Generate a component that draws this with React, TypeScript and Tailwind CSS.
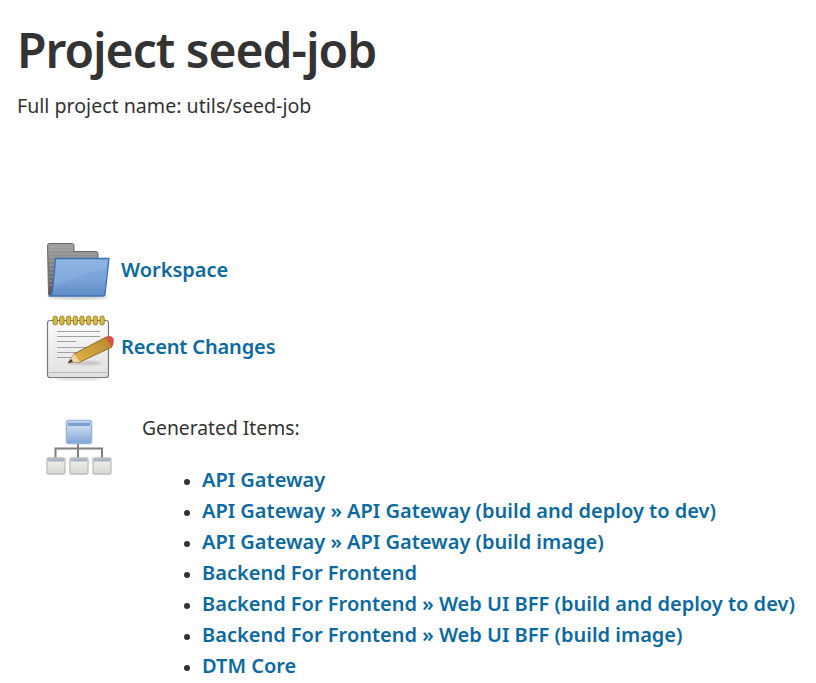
import React from 'react';

const items = [
  'API Gateway',
  'API Gateway » API Gateway (build and deploy to dev)',
  'API Gateway » API Gateway (build image)',
  'Backend For Frontend',
  'Backend For Frontend » Web UI BFF (build and deploy to dev)',
  'Backend For Frontend » Web UI BFF (build image)',
  'DTM Core',
];

const FolderIcon = () => (
  <svg width="66" height="64" viewBox="0 0 66 64" className="shrink-0 mt-[4px] blur-[0.4px]">
    <defs>
      <linearGradient id="fold" x1="0" y1="0" x2="0" y2="1">
        <stop offset="0" stopColor="#84aee2" />
        <stop offset="0.55" stopColor="#79a3da" />
        <stop offset="1" stopColor="#618dc9" />
      </linearGradient>
      <linearGradient id="back" x1="0" y1="0" x2="0" y2="1">
        <stop offset="0" stopColor="#a0a0a0" />
        <stop offset="1" stopColor="#565656" />
      </linearGradient>
      <filter id="soft"><feGaussianBlur stdDeviation="1.5" /></filter>
    </defs>
    <ellipse cx="32" cy="57" rx="30" ry="2.5" fill="#000" opacity="0.2" filter="url(#soft)" />
    <path d="M1.5 5.5 Q1.5 3.5 3.5 3.5 H26 Q28 3.5 28 5.5 V11.5 H50 Q52 11.5 52 13.5 V20 H60 L56 55.5 H4 Q2.5 55.5 2.5 54 Z" fill="url(#back)" stroke="#6a6a6a" strokeWidth="1" />
    <path d="M3 7 H27 M3 10 H27 M3 14 H51 M3 17 H51 M3 21 H9 M3 25 H9 M3 29 H8 M3 33 H8 M3 37 H7 M3 41 H7 M3 45 H6" stroke="#b4b4b4" strokeWidth="0.8" opacity="0.7" />
    <path d="M9.5 18.5 H63 L59 54.5 Q58.7 56 57 56 H3 Q6 55 6.5 51 Z" fill="url(#fold)" stroke="#3f70b3" strokeWidth="1.3" strokeLinejoin="round" />
    <path d="M11 20 H61 L60 28 Q36 33 8 48 Z" fill="#fff" opacity="0.09" />
  </svg>
);

const NotepadIcon = () => (
  <svg width="68" height="68" viewBox="0 0 68 68" className="shrink-0 blur-[0.4px]">
    <defs>
      <linearGradient id="paper" x1="0" y1="0" x2="0" y2="1">
        <stop offset="0" stopColor="#fbfbfb" />
        <stop offset="1" stopColor="#e0e0e0" />
      </linearGradient>
      <linearGradient id="pencil" x1="0" y1="1" x2="1" y2="0">
        <stop offset="0" stopColor="#e6b850" />
        <stop offset="1" stopColor="#b5862a" />
      </linearGradient>
      <filter id="soft2"><feGaussianBlur stdDeviation="1.2" /></filter>
    </defs>
    <ellipse cx="32" cy="66" rx="24" ry="1.5" fill="#000" opacity="0.15" filter="url(#soft2)" />
    <rect x="1.5" y="7.5" width="61" height="57" rx="2.5" fill="url(#paper)" stroke="#777" strokeWidth="1.2" />
    <rect x="2.5" y="59" width="59" height="1" fill="#bbb" />
    <path d="M11 18.5 H54 M11 23.5 H54 M11 28.5 H30 M11 34.5 H54 M11 39.5 H54 M11 44.5 H25" stroke="#a0a0a0" strokeWidth="1.2" />
    {[9, 15.7, 22.4, 29.1, 35.8, 42.5, 49.2, 55.9].map((x) => (
      <rect key={x} x={x - 2} y="3" width="4.4" height="9" rx="2.2" fill="#d8b93e" stroke="#8a7420" strokeWidth="0.8" />
    ))}
    <ellipse cx="40" cy="50" rx="16" ry="2" fill="#000" opacity="0.15" filter="url(#soft2)" />
    <path d="M22 50 L28 41 L60 24 L66 34 L34 49 Z" fill="url(#pencil)" stroke="#7c5a14" strokeWidth="0.8" strokeLinejoin="round" />
    <path d="M22 50 L28 41 L34 49 Z" fill="#ecd6a8" />
    <path d="M22 50 L25 46 L27 49 Z" fill="#333" />
    <path d="M59.5 24 Q65 21.5 67.5 25.5 Q68.5 31 65.5 34.5 Z" fill="#d9534a" />
  </svg>
);

const TreeIcon = () => (
  <svg width="66" height="56" viewBox="0 0 66 56" className="shrink-0 blur-[0.4px]">
    <defs>
      <linearGradient id="top" x1="0" y1="0" x2="0" y2="1">
        <stop offset="0" stopColor="#e3ecf8" />
        <stop offset="1" stopColor="#7fa4d6" />
      </linearGradient>
      <linearGradient id="leaf" x1="0" y1="0" x2="0" y2="1">
        <stop offset="0" stopColor="#f2f3ef" />
        <stop offset="1" stopColor="#d6d8d2" />
      </linearGradient>
    </defs>
    <path d="M32 25 V39 M9.5 39 V29.5 H56 V39" stroke="#7f7f7f" strokeWidth="2" fill="none" />
    <rect x="20.5" y="1.5" width="25" height="23" rx="2.5" fill="url(#top)" stroke="#98b4dc" strokeWidth="1.6" />
    <rect x="22" y="3.5" width="22" height="3.5" fill="#7fa0d2" />
    {[1, 24, 47].map((x) => (
      <g key={x}>
        <rect x={x} y="39" width="18" height="16" rx="1.5" fill="url(#leaf)" stroke="#bdbdbd" strokeWidth="1.3" />
        <rect x={x + 1} y="39.5" width="16" height="3" fill="#a9b4c4" />
      </g>
    ))}
  </svg>
);

const linkClass = 'text-[20px] font-semibold text-[#0b6aa2] no-underline';

export default function App() {
  return (
    <div className="h-[683px] overflow-hidden bg-white text-[#333] font-['Noto_Sans',sans-serif] pl-[17px] pt-[18px]">
      <h1 className="text-[48px] font-semibold leading-[64px] tracking-[-1px]">Project seed-job</h1>
      <p className="text-[19.6px] leading-[26px] mt-[11px]">Full project name: utils/seed-job</p>

      <div className="ml-[29px] mt-[115px] flex flex-col gap-[5px]">
        <div className="flex items-center h-[72px]">
          <div className="w-[75px] shrink-0"><FolderIcon /></div>
          <a href="#" className={linkClass}>Workspace</a>
        </div>
        <div className="flex items-center h-[72px]">
          <div className="w-[75px] shrink-0"><NotepadIcon /></div>
          <a href="#" className={`${linkClass} tracking-[-0.15px]`}>Recent Changes</a>
        </div>
      </div>

      <div className="ml-[29px] mt-[36px] flex items-start">
        <div className="w-[75px] shrink-0"><TreeIcon /></div>
        <div className="pl-[21px]">
          <p className="text-[19.3px] leading-[18px]">Generated Items:</p>
          <ul className="list-disc mt-[27px] pl-[60px] whitespace-nowrap">
            {items.map((item) => (
              <li key={item} className="h-[31px] leading-[31px]">
                <a href="#" className={linkClass}>{item}</a>
              </li>
            ))}
          </ul>
        </div>
      </div>
    </div>
  );
}
